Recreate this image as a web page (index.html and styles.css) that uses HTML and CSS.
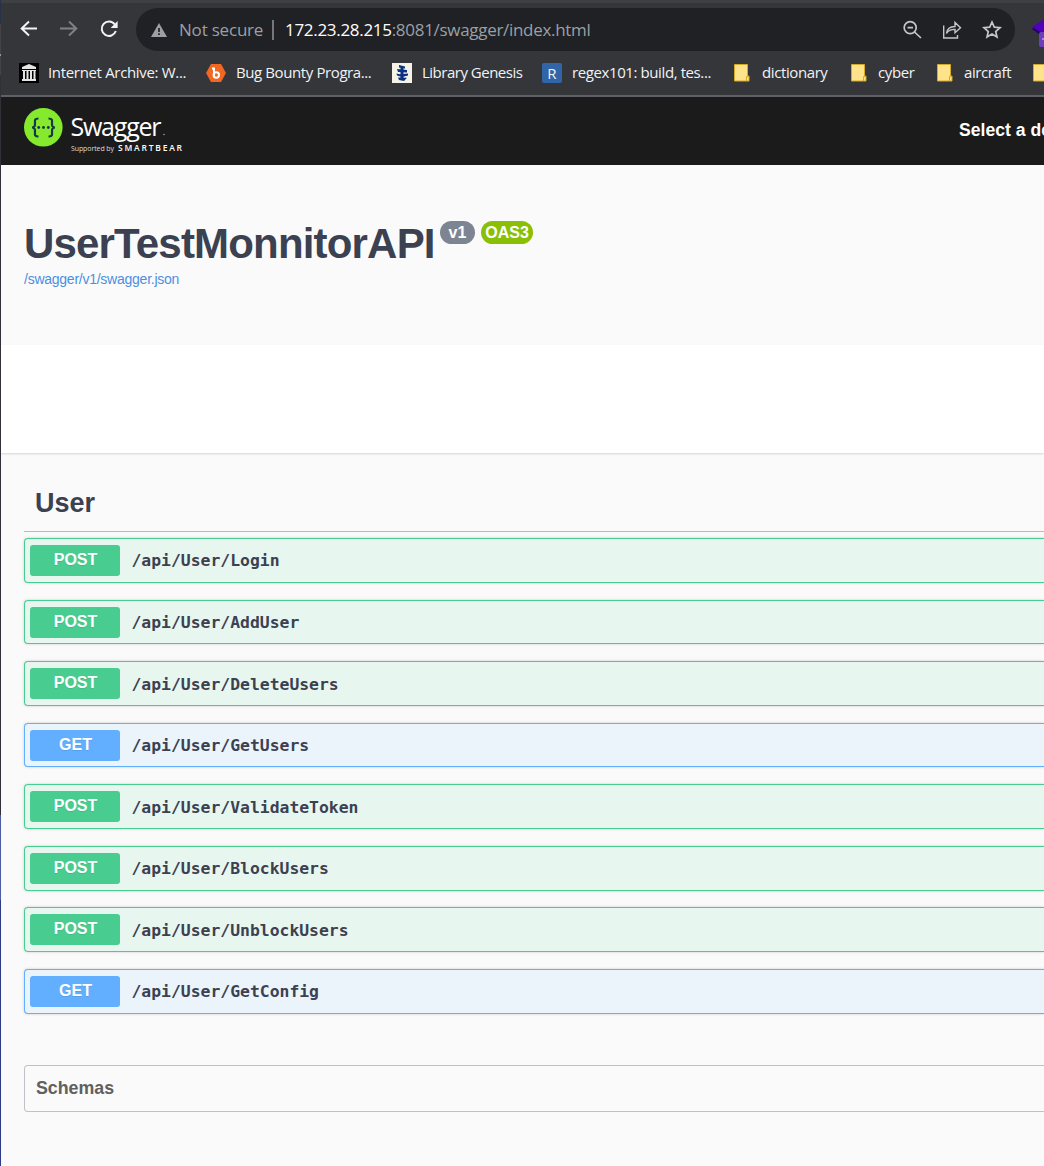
FILE: index.html
```html
<!DOCTYPE html>
<html lang="en">
<head>
<meta charset="utf-8">
<title>Swagger UI</title>
<link rel="stylesheet" href="styles.css">
</head>
<body>
<div class="edge"></div>
<div class="window">
  <div class="toolbar">
    <svg class="nav" width="120" height="43" viewBox="0 0 120 43" fill="none" stroke="#f1f3f4" stroke-width="2">
      <path d="M36 20.500H21M28 13.500l-7.300 7 7.300 7"/>
      <path stroke="#808185" d="M59 20.500h15M68 13.500l7.300 7-7.300 7"/>
      <path d="M113.800 16.500a7.200 7.200 0 1 0 1 6.500"/><path fill="#f1f3f4" stroke="none" d="M116.600 13v7h-7z"/>
    </svg>
    <div class="omnibox">
      <svg class="warn" width="16" height="14" viewBox="0 0 16 14"><path fill="#9aa0a6" d="M8 0l8 14H0z"/><path stroke="#202124" stroke-width="1.700" d="M8 5v4M8 10.300v1.800"/></svg>
      <span class="insecure">Not secure</span><i class="divider"></i>
      <span class="url"><b>172.23.28.215</b><span class="path">:8081/swagger/index.html</span></span>
      <svg class="actions" width="112" height="43" viewBox="0 0 112 43" fill="none" stroke="#c4c6c9" stroke-width="1.700">
        <circle cx="12.200" cy="19.700" r="6"/><path d="M16.500 24l6.500 6M9.500 19.700h5.500"/>
        <path stroke-width="1.400" d="M45.700 17.500V30h13.800v-3M48.500 25.500c.5-4.800 3.700-7 8.500-7v-4l5.500 5.200-5.500 5v-3.300c-4-.1-6.700 1-8.500 4.100z"/>
        <path d="M94 14l2.300 5.200 5.700.5-4.300 3.800 1.300 5.500-5-2.900-5 2.900 1.300-5.500-4.300-3.800 5.700-.5z"/>
      </svg>
    </div>
    <svg class="ext" width="12" height="43" viewBox="0 0 12 43"><path fill="#26006b" d="M0 21l12 9v-7L2 19z"/><path fill="#5000b8" d="M0 19l12-8v15z"/><rect x="7" y="24" width="12" height="15" rx="2" fill="#6c40bd"/><path stroke="#ddd0f5" d="M10 31h2"/></svg>
  </div>
  <div class="bookmarks">
    <svg class="fav f1" width="20" height="20" viewBox="0 0 20 20"><path d="M0 0h20v20H0z"/><path fill="#e4e4e4" d="M10 1l7 3v2H3V4zM3 7h14v1H3zM4 8h2v8H4zm3.500 0h2v8h-2zm3.500 0h2v8h-2zm3.500 0h2v8h-2zM3 16h14v2H3z"/></svg>
    <span class="bm b1">Internet Archive: W...</span>
    <svg class="fav f2" width="20" height="20" viewBox="0 0 20 20"><path fill="#f26722" d="M5 1h10l5 9-5 9H5L0 10z"/><path fill="none" stroke="#fff" stroke-width="2" d="M6 5.500h2v9"/><circle cx="10.300" cy="12" r="2.700" fill="none" stroke="#fff" stroke-width="2"/></svg>
    <span class="bm b2">Bug Bounty Progra...</span>
    <svg class="fav f3" width="20" height="20" viewBox="0 0 20 20"><path fill="#f4f3e6" d="M0 0h20v20H0z"/><g fill="#0b3082"><path d="M7 2l6 1.500v2L7 4.500zM5 6l10 1v2.500L6 9zM4.500 10.500l3.500.7 8-.7v2l-6 1.500-5-1.500zM6 14.500l9 .3-3 3.200-5-1z"/><path d="M8.500 4h3v12h-3z"/></g></svg>
    <span class="bm b3">Library Genesis</span>
    <span class="fav f4 regex">R</span>
    <span class="bm b4">regex101: build, tes...</span>
    <svg class="fav f5" width="20" height="20" viewBox="0 0 20 20"><path fill="#ffe38a" stroke="#d6a928" d="M2.500 1.500h13v11.500h1.500v5H2.500z"/><path fill="none" stroke="#d6a928" d="M14.500 18v-4.500h2.500"/></svg>
    <span class="bm b5">dictionary</span>
    <svg class="fav f6" width="20" height="20" viewBox="0 0 20 20"><path fill="#ffe38a" stroke="#d6a928" d="M2.500 1.500h13v11.500h1.500v5H2.500z"/><path fill="none" stroke="#d6a928" d="M14.500 18v-4.500h2.500"/></svg>
    <span class="bm b6">cyber</span>
    <svg class="fav f7" width="20" height="20" viewBox="0 0 20 20"><path fill="#ffe38a" stroke="#d6a928" d="M2.500 1.500h13v11.500h1.500v5H2.500z"/><path fill="none" stroke="#d6a928" d="M14.500 18v-4.500h2.500"/></svg>
    <span class="bm b7">aircraft</span>
    <svg class="fav f8" width="20" height="20" viewBox="0 0 20 20"><path fill="#ffe38a" stroke="#d6a928" d="M2.500 1.500h13v11.500h1.500v5H2.500z"/></svg>
  </div>
  <header class="topbar">
    <svg class="logo" width="170" height="54" viewBox="0 0 170 54">
      <circle cx="19.300" cy="22.300" r="19.300" fill="#85ea2d"/>
      <g fill="none" stroke="#173647" stroke-width="2.200"><path d="M14.500 13.500c-4 0-3.700 1.500-3.500 5 .1 2.500-.5 4-3 4 2.500 0 3.100 1.500 3 4-.2 3.500-.5 5 3.500 5M24.500 13.500c4 0 3.700 1.500 3.500 5-.1 2.500.5 4 3 4-2.500 0-3.100 1.500-3 4 .2 3.500.5 5-3.500 5"/></g>
      <g fill="#173647"><circle cx="14.700" cy="22.500" r="1.400"/><circle cx="19.500" cy="22.500" r="1.400"/><circle cx="24.300" cy="22.500" r="1.400"/></g>
      <text class="brand" x="46.500" y="30.500" textLength="91">Swagger</text>
      <circle cx="140" cy="29.500" r=".7" fill="#bbb"/>
      <text class="support" x="47" y="46" textLength="43">Supported by</text>
      <text class="bear" x="94" y="46" textLength="64">SMARTBEAR</text>
    </svg>
    <span class="select">Select a definition</span>
  </header>
  <section class="info">
    <h1><span class="title">UserTestMonnitorAPI</span><span class="pill v">v1</span><span class="pill oas">OAS3</span></h1>
    <a class="spec">/swagger/v1/swagger.json</a>
  </section>
  <div class="scheme"></div>
  <main>
    <h2>User</h2>
    <div class="ops">
      <div class="op post"><span class="method">POST</span><span class="route">/api/User/Login</span></div>
      <div class="op post"><span class="method">POST</span><span class="route">/api/User/AddUser</span></div>
      <div class="op post"><span class="method">POST</span><span class="route">/api/User/DeleteUsers</span></div>
      <div class="op get"><span class="method">GET</span><span class="route">/api/User/GetUsers</span></div>
      <div class="op post"><span class="method">POST</span><span class="route">/api/User/ValidateToken</span></div>
      <div class="op post"><span class="method">POST</span><span class="route">/api/User/BlockUsers</span></div>
      <div class="op post"><span class="method">POST</span><span class="route">/api/User/UnblockUsers</span></div>
      <div class="op get"><span class="method">GET</span><span class="route">/api/User/GetConfig</span></div>
    </div>
    <div class="schemas">Schemas</div>
  </main>
</div>
</body>
</html>
```
FILE: styles.css
```css
* { box-sizing: border-box; }
body {
  margin: 0;
  width: 1044px;
  height: 1166px;
  display: flex;
  overflow: hidden;
  background: #fafafa;
  color: #3b4151;
  font-family: "Liberation Sans", Arial, sans-serif;
}
.edge {
  flex: 0 0 1px;
  background: linear-gradient(#28334a 0 24px, #444 24px 54px, #999 54px 56px, #444 56px 75px, #303136 75px 815px, #4a5da0 815px 900px, #2d3c85 900px);
}
.window { flex: 1; min-width: 0; overflow: hidden; }

.toolbar {
  display: flex;
  height: 54px;
  padding-top: 5px;
  border-top: 3px solid #3c4043;
  background: #35363a;
}
.nav { flex: none; margin-left: -.5px; }
.omnibox {
  display: flex;
  flex: none;
  align-items: center;
  width: 879px;
  height: 43px;
  margin-left: 15.5px;
  padding-left: 15px;
  border-radius: 22px;
  background: #202124;
  font: 17px/43px "Open Sans", sans-serif;
  color: #9aa0a6;
  white-space: nowrap;
}
.warn { flex: none; margin: 0 12px 0 0; }
.insecure { width: 93px; letter-spacing: -.2px; }
.divider { width: 2px; height: 20px; margin-right: 11px; background: #75777b; }
.url { width: 611px; }
.url b { font-weight: 400; color: #fff; }
.url b, .path { letter-spacing: -.3px; }
.actions { flex: none; margin-left: 2px; }
.ext { flex: none; margin-left: 17px; }

.bookmarks {
  display: flex;
  align-items: center;
  height: 43px;
  padding: 0 0 5px 18px;
  border-bottom: 2px solid #5f6066;
  background: #35363a;
  font: 15px/20px "Open Sans", sans-serif;
  color: #f1f3f4;
  white-space: nowrap;
}
.fav { flex: none; margin: 1px 10px 0 0; }
.bm { flex: none; letter-spacing: -.4px; }
.b1 { width: 158px; margin-left: -1px; letter-spacing: -.33px; }
.b2 { width: 156px; }
.b3 { width: 120px; letter-spacing: -.5px; }
.b4 { width: 160px; }
.b5 { width: 87px; }
.b6 { width: 57px; margin-left: -1px; }
.b7 { width: 67px; margin-left: -1px; }
.regex { width: 20px; border-radius: 2px; background: #3264a8; text-align: center; }

.topbar { display: flex; height: 68px; padding: 8px 0 0 23px; background: #1b1b1b; }
.logo { flex: none; }
.brand { font: 25px "Open Sans", sans-serif; fill: #fff; }
.support { font: 7px "Open Sans", sans-serif; fill: #ddd; }
.bear { font: 600 8.5px "Open Sans", sans-serif; fill: #fff; }
.select { margin: 15px 0 0 765px; font: bold 17.6px/21px "Liberation Sans", sans-serif; color: #fff; white-space: nowrap; }

.info { height: 180px; padding: 55px 0 0 23px; }
h1 { display: flex; margin: 0; height: 48px; font-size: 42px; line-height: 47px; }
.title { width: 416px; letter-spacing: -.82px; }
.pill { height: 23px; margin-top: 1px; border-radius: 12px; color: #fff; font-size: 16px; line-height: 23px; text-align: center; }
.v { width: 35px; background: #7d8492; }
.oas { width: 52px; margin-left: 6px; background: #89bf04; }
.spec { display: block; margin-top: 3px; font-size: 14px; line-height: 17px; letter-spacing: -.25px; color: #4990e2; }
.scheme { height: 108px; background: #fff; box-shadow: 0 1px 2px rgba(0, 0, 0, .15); }

main { padding: 28px 0 0 23px; }
h2 { height: 51px; margin: 0 0 6.2px; padding-left: 11px; border-bottom: 1px solid rgba(59, 65, 81, .35); font-size: 27px; line-height: 44px; }
.ops { display: grid; gap: 16.96px; }
.op {
  display: flex;
  align-items: center;
  height: 44.6px;
  padding-left: 5px;
  border: 1px solid;
  border-right: 0;
  border-radius: 4px 0 0 4px;
  box-shadow: 0 0 3px rgba(0, 0, 0, .19);
}
.post { border-color: #49cc90; background: #e8f6f0; }
.get { border-color: #61affe; background: #ebf3fb; }
.method { width: 90px; height: 31px; padding-left: 1px; border-radius: 3px; color: #fff; font-weight: 700; font-size: 16px; line-height: 30px; text-align: center; text-shadow: 0 1px 0 rgba(0, 0, 0, .1); }
.post .method { background: #49cc90; }
.get .method { background: #61affe; }
.route { margin: 2px 0 0 11.5px; font: bold 16.4px/20px "DejaVu Sans Mono", monospace; }
.schemas { height: 47px; margin-top: 51.4px; padding-left: 11px; border: 1px solid rgba(59, 65, 81, .3); border-right: 0; border-radius: 4px 0 0 4px; color: #606060; font-weight: 700; font-size: 17.8px; line-height: 44px; }
```
